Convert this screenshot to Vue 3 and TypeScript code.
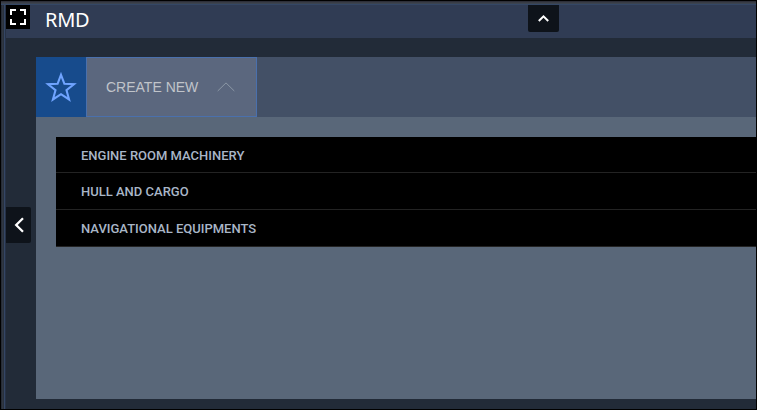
<script setup lang="ts">
interface Entry {
  label: string
  kind: string
}

const title = 'RMD'
const entries: Entry[] = [
  { label: 'ENGINE ROOM MACHINERY', kind: 'engine' },
  { label: 'HULL AND CARGO', kind: 'hull' },
  { label: 'NAVIGATIONAL EQUIPMENTS', kind: 'navigation' },
]
</script>

<template>
  <div class="window">
    <div class="top-edge"></div>
    <div class="shell">
      <div class="left-edge"></div>
      <div class="page">
        <header class="header">
          <button class="expand" aria-label="Full screen">
            <svg width="24" height="24" viewBox="0 0 24 24">
              <path d="M5 10V5H10M14 5H19V10M19 14V19H14M10 19H5V14" fill="none" stroke="#fff" stroke-width="2" />
            </svg>
          </button>
          <h1 class="title">{{ title }}</h1>
        </header>
        <section class="panel">
          <nav class="tabs">
            <button class="favourite" aria-label="Favourites">
              <svg width="50" height="60" viewBox="0 0 50 60">
                <path
                  d="M25 17.8L28.4 26.8L38 27.2L30.5 33.2L33.1 42.5L25 37.2L16.9 42.5L19.5 33.2L12 27.2L21.6 26.8Z"
                  fill="none" stroke="#70a4ff" stroke-width="2.1"
                />
              </svg>
            </button>
            <button class="tab">
              <span class="tab-label">CREATE NEW</span>
              <svg width="18" height="10" viewBox="0 0 18 10">
                <path d="M.7 9L9 .9L17.3 9" fill="none" stroke="#8c98a6" stroke-width="1" />
              </svg>
            </button>
          </nav>
          <ul class="list">
            <li v-for="entry in entries" :key="entry.kind" class="row">
              <span :class="entry.kind">{{ entry.label }}</span>
            </li>
          </ul>
        </section>
      </div>
    </div>
    <button class="collapse-up" aria-label="Collapse header">
      <svg width="31" height="27" viewBox="0 0 31 27">
        <path d="M10.8 16L15.5 11.3L20.2 16" fill="none" stroke="#fff" stroke-width="2" />
      </svg>
    </button>
    <button class="collapse-left" aria-label="Collapse menu">
      <svg width="25" height="36" viewBox="0 0 25 36">
        <path d="M17 11.3L10.2 18L17 24.7" fill="none" stroke="#fff" stroke-width="2.3" />
      </svg>
    </button>
  </div>
</template>

<style>
body {
  margin: 0;
  overflow: hidden;
}
</style>

<style scoped>
.window {
  position: relative;
  box-sizing: border-box;
  width: 757px;
  height: 410px;
  border: 1px solid #000;
  background: #222b38;
  display: flex;
  flex-direction: column;
  overflow: hidden;
}
button {
  padding: 0;
  border: 0;
  margin: 0;
}
svg {
  display: block;
}
.top-edge {
  flex: none;
  height: 4px;
  background: linear-gradient(#2d2f38 0 1px, #383c45 1px 2px, #3b434f 2px 3px, #344765 3px 4px);
}
.shell {
  flex: 1;
  display: flex;
  min-height: 0;
}
.left-edge {
  flex: none;
  width: 5px;
  background: linear-gradient(90deg, #262c36 0 1px, #303743 1px 2px, #29313d 2px 3px, #344665 3px 4px, #273246 4px 5px);
}
.page {
  flex: 1;
  min-width: 0;
}
.header {
  height: 33px;
  display: flex;
  align-items: flex-start;
  background: #303c54;
}
.expand {
  width: 24px;
  height: 24px;
  background: #000;
}
.title {
  margin: 0 0 0 15px;
  padding-top: 3px;
  font: 400 20px/24px "Noto Sans", sans-serif;
  letter-spacing: -0.3px;
  color: #fff;
}
.panel {
  margin: 19px 0 0 30px;
  height: 342px;
  background: #596779;
}
.tabs {
  height: 60px;
  display: flex;
  background: #435066;
}
.favourite {
  width: 50px;
  background: #174b8c;
}
.tab {
  box-sizing: border-box;
  width: 171px;
  border: 1px solid #4a70ad;
  padding-left: 19px;
  display: flex;
  align-items: center;
  gap: 18px;
  background: #5b677e;
}
.tab-label {
  width: 93px;
  font: 14px/20px "Liberation Sans", sans-serif;
  white-space: nowrap;
  text-align: left;
  color: #c0c4ca;
}
.list {
  list-style: none;
  margin: 20px 0 0 20px;
  padding: 0;
  background: #000;
}
.row {
  box-sizing: border-box;
  height: 37px;
  padding-left: 25px;
  border-bottom: 1px solid #232323;
  font: 500 13px/37px Roboto, sans-serif;
  color: #a9b6c7;
}
.row:first-child {
  height: 36px;
}
.collapse-up {
  position: absolute;
  left: 527px;
  top: 4px;
  width: 31px;
  height: 27px;
  border-radius: 0 0 2px 2px;
  background: #0e131a;
}
.collapse-left {
  position: absolute;
  left: 5px;
  top: 206px;
  width: 25px;
  height: 36px;
  border-radius: 0 2px 2px 0;
  background: #0e131a;
}
</style>
